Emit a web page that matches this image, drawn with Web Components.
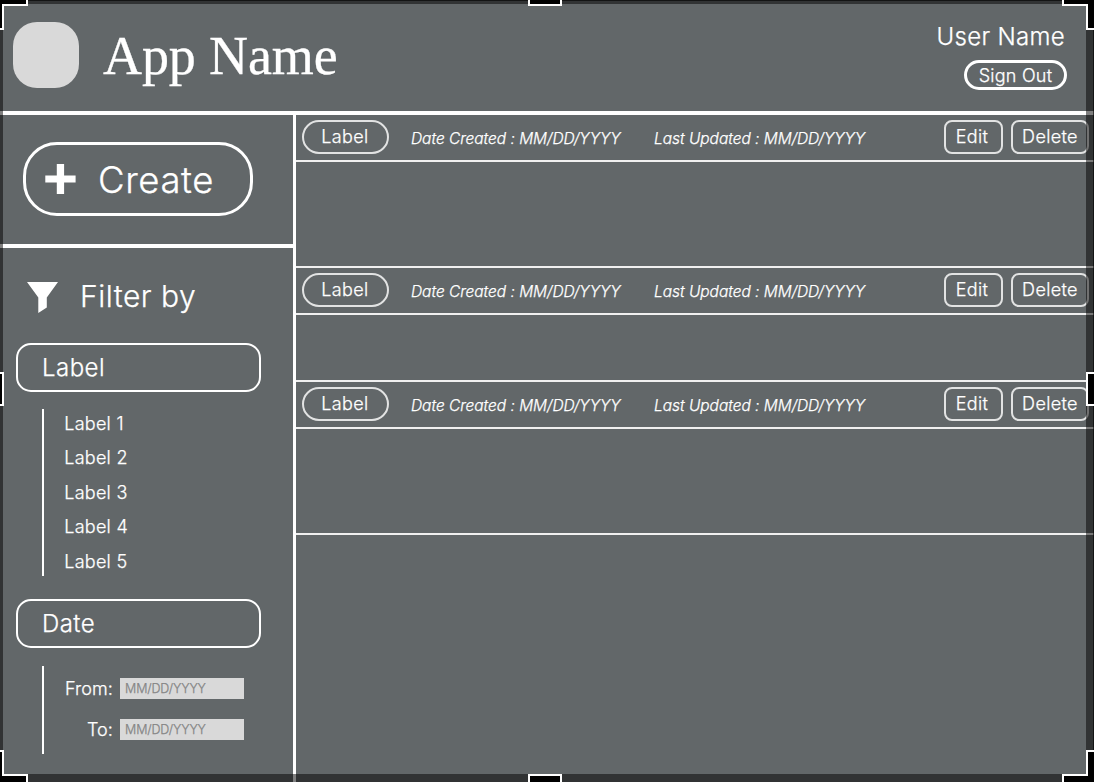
<!DOCTYPE html>
<html lang="en">
<head>
<meta charset="utf-8">
<title>App Name</title>
<style>
html,body{margin:0;width:1094px;height:782px;overflow:hidden;background:#626769}
body{font-family:Inter,"Liberation Sans",sans-serif;font-weight:300;-webkit-text-stroke:.25px;color:#fff}
</style>
</head>
<body>
<app-shell></app-shell>
<script>
const define = (name, html) => customElements.define(name, class extends HTMLElement {
  constructor() {
    super();
    this.attachShadow({ mode: 'open' }).innerHTML = html;
  }
});

define('app-header', `
<style>
:host{display:flex;box-sizing:border-box;height:115px;border-bottom:4px solid #fff;padding:22px 27px 0 13px}
.logo{width:66px;height:66px;border-radius:24px;background:#d9d9d9}
h1{margin:0 0 0 24px;font:400 54px/66px "Liberation Serif",serif;letter-spacing:-.1px;white-space:nowrap;padding-top:1px;-webkit-text-stroke:.3px #fff}
.user{margin-left:auto;display:flex;flex-direction:column;align-items:flex-end}
.name{font-size:24px;line-height:30px;letter-spacing:.32px;margin-right:2px}
.out{box-sizing:border-box;width:103px;height:30px;margin-top:8px;border:3px solid #fff;border-radius:15px;text-align:center;font-size:18px;line-height:25px;letter-spacing:.25px}
</style>
<div class="logo"></div><h1><slot></slot></h1>
<div class="user"><div class="name">User Name</div><div class="out">Sign Out</div></div>`);

define('create-button', `
<style>
:host{display:flex;align-items:center;box-sizing:border-box;width:230px;height:74px;border:3px solid #fff;border-radius:34px;font-size:36.5px;letter-spacing:.6px;padding:1px 0 0 19px}
svg{margin-right:22px}
</style>
<svg width="31" height="31"><path d="M11.8 0h7.3v11.4h11.5v7.2H19.1v11.3h-7.3V18.6H.3v-7.2h11.5z" fill="#fff"/></svg><slot></slot>`);

define('filter-group', `
<style>
:host{display:block}
.head{box-sizing:border-box;width:245px;height:49px;border:2px solid #fff;border-radius:15px;margin-left:16px;padding-left:24px;font-size:24px;line-height:46px;letter-spacing:.45px}
.body{display:flow-root;margin:var(--gap) 0 0 42px;border-left:2px solid #fff;box-sizing:border-box;height:var(--h);padding:var(--pad)}
</style>
<div class="head"><slot name="title"></slot></div><div class="body"><slot></slot></div>`);

define('filter-option', `
<style>:host{display:block;font-size:18px;line-height:34.4px;height:34.4px;letter-spacing:.25px;padding-left:20.3px}</style><slot></slot>`);

define('date-field', `
<style>
:host{display:flex;height:21px;align-items:center;margin-bottom:20px}
span{width:69px;text-align:right;font-size:18px;line-height:22px;margin-right:7px;letter-spacing:.1px}
div{width:124px;height:21px;box-sizing:border-box;background:#d9d9d9;color:#858585;font-size:12.5px;line-height:22px;letter-spacing:-.12px;padding-left:5px}
</style>
<span><slot></slot></span><div>MM/DD/YYYY</div>`);

define('side-bar', `
<style>
:host{display:block;box-sizing:border-box;width:296px;border-right:3px solid #fff}
.create{box-sizing:border-box;height:133px;border-bottom:4px solid #fff;padding:27px 0 0 23px}
.filter{display:flex;align-items:center;height:36px;margin:30px 0 29px;padding-left:27px;font-size:30px;letter-spacing:.5px}
.filter svg{margin-right:22px}
.options{margin-top:-2px}
</style>
<div class="create"><create-button>Create</create-button></div>
<div class="filter"><svg width="31" height="36"><path d="M0 4H31L19.8 19.5V29.5L11.3 35V19.5Z" fill="#fff"/></svg>Filter by</div>
<filter-group style="--h:167px;--pad:0;--gap:17px"><span slot="title">Label</span>
<div class="options"><filter-option>Label 1</filter-option><filter-option>Label 2</filter-option><filter-option>Label 3</filter-option><filter-option>Label 4</filter-option><filter-option>Label 5</filter-option></div></filter-group>
<filter-group style="--h:88px;--pad:12px 0 0;--gap:18px;margin-top:23px"><span slot="title">Date</span>
<date-field>From:</date-field><date-field>To:</date-field></filter-group>`);

define('entry-card', `
<style>
:host{display:block;box-sizing:border-box;height:var(--h);border-bottom:2px solid #f0f0f0}
.bar{display:flex;box-sizing:border-box;height:47px;border-bottom:2px solid #f0f0f0;padding:5px 0 0 6px;white-space:nowrap}
.pill,.btn{box-sizing:border-box;height:34px;border:2px solid #e2e3e3;text-align:center;font-size:18px;line-height:30px;letter-spacing:.35px}
.pill{width:87px;border-radius:17px;padding-right:1px}
.btn{border-radius:8px}
i{font-size:15.5px;line-height:38px;letter-spacing:-.03px}
.c{margin-left:22px;width:243px}.u{width:290px}
</style>
<div class="bar"><div class="pill">Label</div><i class="c">Date Created : MM/DD/YYYY</i><i class="u">Last Updated : MM/DD/YYYY</i>
<div class="btn" style="width:59px;margin-right:8px;padding-right:3px">Edit</div><div class="btn" style="width:78px">Delete</div></div>`);

define('crop-frame', `
<style>
:host{position:absolute;inset:0;box-sizing:border-box;border:solid rgba(0,0,0,.5);border-width:4px 8px 8px 3px}
svg{position:absolute;left:-3px;top:-4px}
</style>
<svg width="1094" height="782" fill="#000" stroke="#fff" stroke-width="2"><path stroke="none" d="M0 0H1094V1H0ZM1093 0V782H1094V0Z" fill-opacity=".6"/><path d="M-2-2H27V5H3V29H-2ZM1096-2H1063V5H1087V29H1096ZM-2 784V751H3V775H27V784ZM1096 784V751H1087V775H1063V784ZM529-2V5H561V-2ZM529 784V775H561V784ZM-2 373H3V405H-2ZM1096 373H1087V405H1096Z"/></svg>`);

define('app-shell', `
<style>
:host{display:block;position:relative;width:1094px;height:782px;overflow:hidden}
.main{display:flex;height:667px}
.list{flex:1;min-width:0}
</style>
<app-header>App Name</app-header>
<div class="main"><side-bar></side-bar><div class="list">
<entry-card style="--h:153px"></entry-card><entry-card style="--h:114px"></entry-card><entry-card style="--h:153px"></entry-card></div></div>
<crop-frame></crop-frame>`);
</script>
</body>
</html>
